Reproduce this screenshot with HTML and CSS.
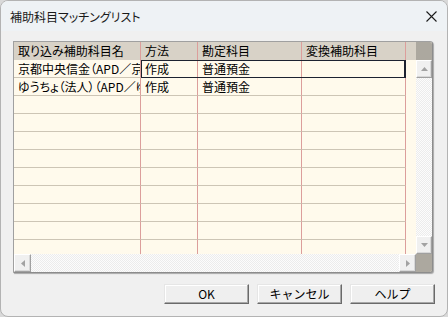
FILE: index.html
```html
<!DOCTYPE html>
<html lang="ja">
<head>
    <meta charset="UTF-8">
    <title>補助科目マッチングリスト</title>
    <link rel="stylesheet" href="styles.css">
</head>
<body>
    <div class="window">
        <div class="titlebar">
            <span class="title">補助科目マッチングリスト</span>
            <span class="close">
                <svg width="11" height="11" viewBox="0 0 11 11"><path d="M0.5 0.5 L10.5 10.5 M10.5 0.5 L0.5 10.5" stroke="#1b1b1b" stroke-width="1.1" fill="none"/></svg>
            </span>
        </div>
        <div class="content">
            <div class="grid">
                <div class="sheet">
                    <div class="row head">
                        <div class="cell c1">取り込み補助科目名</div>
                        <div class="cell c2">方法</div>
                        <div class="cell c3">勘定科目</div>
                        <div class="cell c4">変換補助科目</div>
                        <div class="cell fill"></div>
                    </div>
                    <div class="row">
                        <div class="cell c1">京都中央信金（APD／京都中央信金）</div>
                        <div class="cell c2">作成</div>
                        <div class="cell c3">普通預金</div>
                        <div class="cell c4"></div>
                        <div class="cell fill"></div>
                    </div>
                    <div class="row">
                        <div class="cell c1">ゆうちょ（法人）（APD／ゆうちょ）</div>
                        <div class="cell c2">作成</div>
                        <div class="cell c3">普通預金</div>
                        <div class="cell c4"></div>
                        <div class="cell fill"></div>
                    </div>
                    <div class="row"><div class="cell c1"></div><div class="cell c2"></div><div class="cell c3"></div><div class="cell c4"></div><div class="cell fill"></div></div>
                    <div class="row"><div class="cell c1"></div><div class="cell c2"></div><div class="cell c3"></div><div class="cell c4"></div><div class="cell fill"></div></div>
                    <div class="row"><div class="cell c1"></div><div class="cell c2"></div><div class="cell c3"></div><div class="cell c4"></div><div class="cell fill"></div></div>
                    <div class="row"><div class="cell c1"></div><div class="cell c2"></div><div class="cell c3"></div><div class="cell c4"></div><div class="cell fill"></div></div>
                    <div class="row"><div class="cell c1"></div><div class="cell c2"></div><div class="cell c3"></div><div class="cell c4"></div><div class="cell fill"></div></div>
                    <div class="row"><div class="cell c1"></div><div class="cell c2"></div><div class="cell c3"></div><div class="cell c4"></div><div class="cell fill"></div></div>
                    <div class="row"><div class="cell c1"></div><div class="cell c2"></div><div class="cell c3"></div><div class="cell c4"></div><div class="cell fill"></div></div>
                    <div class="row"><div class="cell c1"></div><div class="cell c2"></div><div class="cell c3"></div><div class="cell c4"></div><div class="cell fill"></div></div>
                    <div class="row"><div class="cell c1"></div><div class="cell c2"></div><div class="cell c3"></div><div class="cell c4"></div><div class="cell fill"></div></div>
                    <div class="cursor"></div>
                </div>

                <div class="vscroll">
                    <div class="sb-head"></div>
                    <div class="sb-btn v">
                        <svg width="7" height="4" viewBox="0 0 7 4"><path d="M3.5 0 L7 4 L0 4 Z" fill="#a2a2a2"/></svg>
                    </div>
                    <div class="track"></div>
                    <div class="sb-btn v">
                        <svg width="7" height="4" viewBox="0 0 7 4"><path d="M0 0 L7 0 L3.5 4 Z" fill="#a2a2a2"/></svg>
                    </div>
                </div>

                <div class="hscroll">
                    <div class="sb-btn h">
                        <svg width="4" height="7" viewBox="0 0 4 7"><path d="M4 0 L4 7 L0 3.5 Z" fill="#a2a2a2"/></svg>
                    </div>
                    <div class="track"></div>
                    <div class="sb-btn h">
                        <svg width="4" height="7" viewBox="0 0 4 7"><path d="M0 0 L4 3.5 L0 7 Z" fill="#a2a2a2"/></svg>
                    </div>
                </div>

                <div class="corner"></div>
            </div>

            <div class="buttons">
                <button class="btn">OK</button>
                <button class="btn">キャンセル</button>
                <button class="btn">ヘルプ</button>
            </div>
        </div>
    </div>
</body>
</html>
```

FILE: styles.css
```css
:root {
    --face: #f0f0f0;
    --cream: #fffaec;
    --head: #d8d2c7;
    --rule: #cdc5b5;
    --col-line: #dc9e9b;
    --sb-gray: #aca89f;
}

html, body {
    margin: 0; padding: 0;
    width: 448px; height: 317px;
    background: #d9d9d9;
    overflow: hidden;
}

body {
    font-family: "Noto Sans CJK JP", "Noto Sans", sans-serif;
    font-size: 12px;
    color: #000;
}

.window {
    width: 448px; height: 317px;
    box-sizing: border-box;
    border: 1px solid #b3b3b3;
    border-radius: 8px;
    background: var(--face);
    overflow: hidden;
    display: flex; flex-direction: column;
}

/* --- title bar --- */
.titlebar {
    height: 30px;
    background: #eef2f5;
    display: flex; align-items: center; justify-content: space-between;
    padding: 0 9px 0 9px;
    flex-shrink: 0;
}
.title {
    font-size: 12px;
    line-height: 14px;
    font-feature-settings: "palt";
    color: #1a1a1a;
    padding-top: 1px;
}
.close { display: flex; width: 11px; height: 11px; margin-right: 1px; }

/* --- body --- */
.content {
    flex: 1;
    padding: 10px 0 0 12px;
    display: flex; flex-direction: column;
}

.grid {
    display: grid;
    grid-template-columns: 402px 16px;
    grid-template-rows: 212px 18px;
    width: 418px;
    border: 1px solid #a0a0a0;
    border-right-color: #8c8c8c;
    border-bottom-color: #8c8c8c;
    box-shadow: 1px 1px 1px #a8a8a8;
    border-radius: 0 3px 3px 0;
    overflow: hidden;
    background: var(--cream);
}

.sheet {
    position: relative;
    overflow: hidden;
    background: var(--cream);
}

.row {
    display: flex;
    height: 18px;
}
.cell {
    box-sizing: border-box;
    height: 18px;
    border-right: 1px solid var(--col-line);
    border-bottom: 1px solid var(--rule);
    padding-left: 4px;
    line-height: 17px;
    white-space: nowrap;
    overflow: hidden;
    flex-shrink: 0;
    font-feature-settings: "palt";
}
.c1 { width: 127px; }
.c2 { width: 57px; }
.c3 { width: 104px; }
.c4 { width: 104px; }
.fill { width: 10px; border-right: none; border-bottom: none; }

.head .cell { background: var(--head); border-bottom: none; }

/* current row frame over the editable columns */
.cursor {
    position: absolute;
    left: 127px; top: 18px;
    width: 265px; height: 18px;
    box-sizing: border-box;
    border: 1px solid #1d2230;
    border-right-width: 2px;
    pointer-events: none;
}

/* --- scroll bars --- */
.vscroll {
    display: flex; flex-direction: column;
}
.sb-head { height: 18px; background: var(--sb-gray); }
.hscroll { display: flex; }
.corner { background: var(--sb-gray); }

.track {
    flex: 1;
    background-color: #fcfcfc;
    background-image: repeating-conic-gradient(#ececec 0 25%, #fcfcfc 0 50%);
    background-size: 2px 2px;
}

.sb-btn {
    box-sizing: border-box;
    background: #f0f0f0;
    border: 1px solid;
    border-color: #ffffff #a0a0a0 #a0a0a0 #ffffff;
    box-shadow: inset -1px -1px 0 #d8d8d8;
    display: flex; align-items: center; justify-content: center;
    flex-shrink: 0;
}
.sb-btn.v { height: 18px; }
.sb-btn.h { width: 17px; }

/* --- buttons --- */
.buttons {
    display: flex; justify-content: flex-end; gap: 8px;
    padding: 11px 12px 0 0;
}
.btn {
    width: 85px; height: 20px;
    box-sizing: border-box;
    background: #efefef;
    border: 1px solid;
    border-color: #e6e6e6 #6a6a6a #6a6a6a #e6e6e6;
    box-shadow: inset -1px -1px 0 #a8a8a8, inset 1px 1px 0 #ffffff;
    font-family: "Noto Sans CJK JP", "Noto Sans", sans-serif;
    font-size: 12px;
    line-height: 16px;
    color: #000;
    padding: 0;
}
```
